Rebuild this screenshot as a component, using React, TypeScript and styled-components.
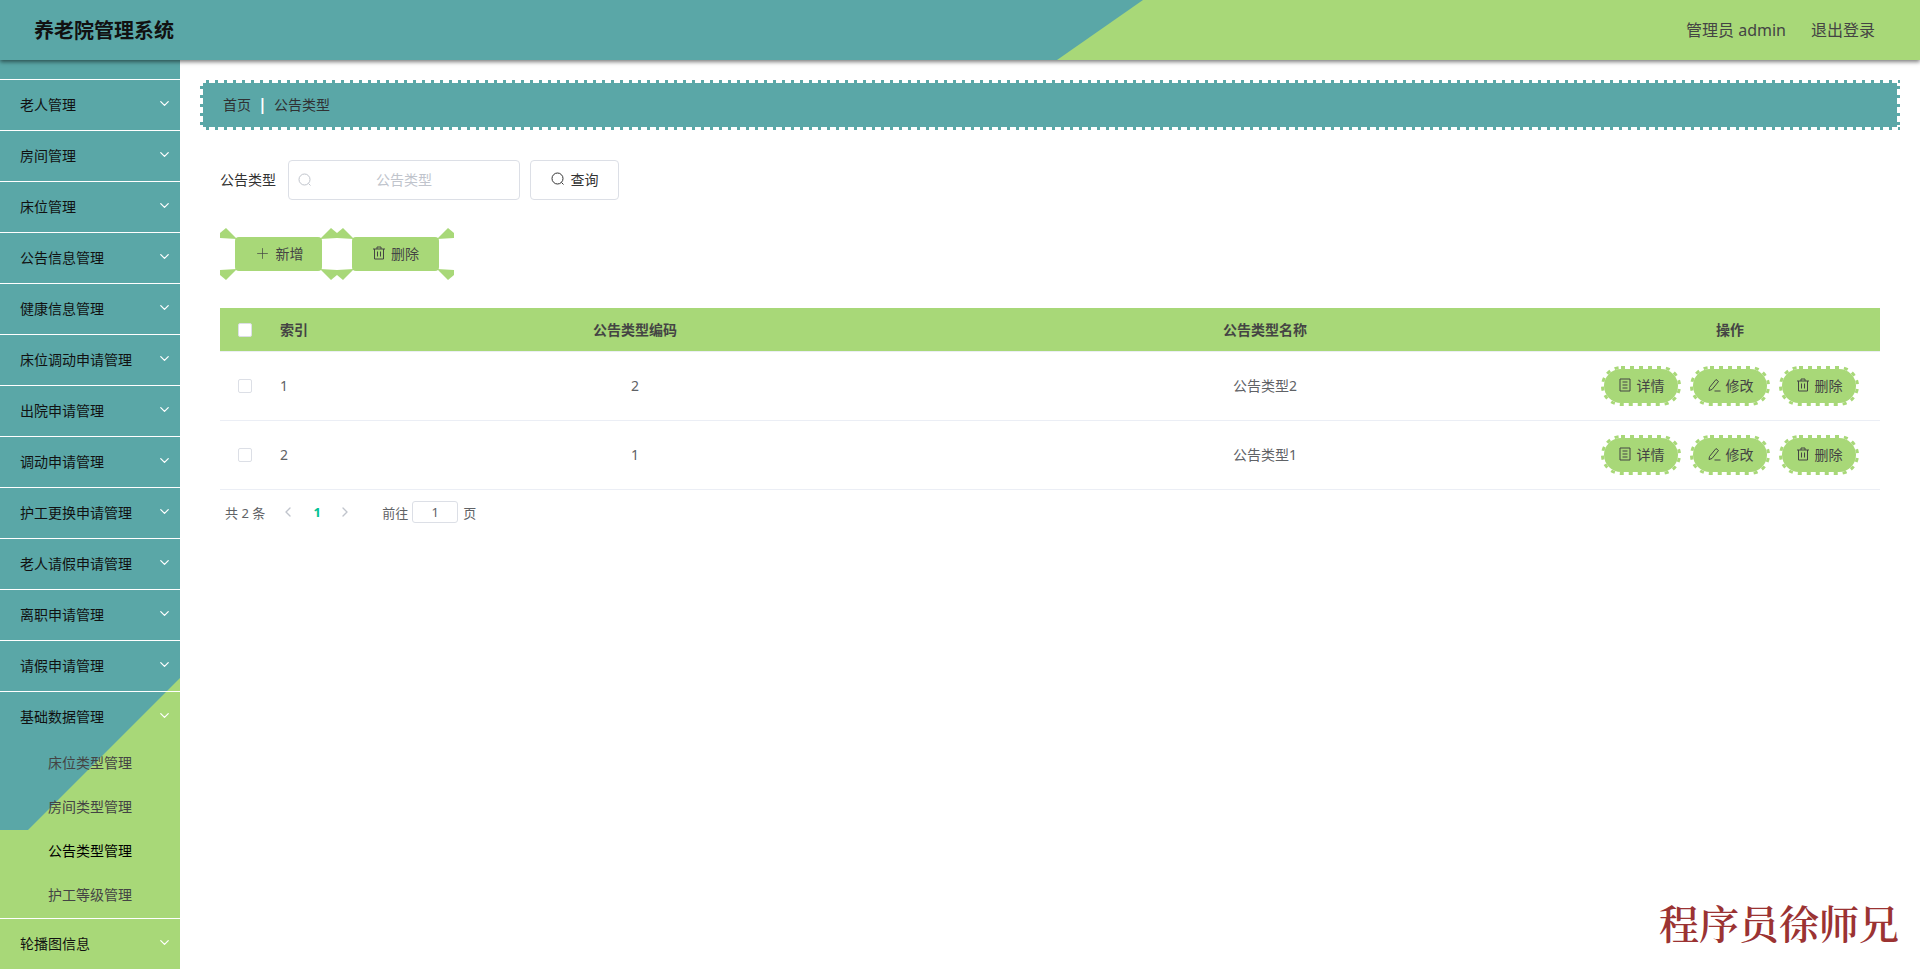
import styled, { createGlobalStyle } from "styled-components";
import { ChevronDown, ChevronLeft, ChevronRight, Plus } from "lucide-react";

const TEAL = "#5aa7a7";
const GREEN = "#a8d878";

const GlobalStyle = createGlobalStyle`
  html, body {
    margin: 0;
    height: 100%;
    overflow: hidden;
    background: #fff;
    font-family: "Noto Sans", "Noto Sans CJK SC", "Liberation Sans", sans-serif;
  }
  * {
    box-sizing: border-box;
  }
`;

const Page = styled.div`
  height: 969px;
  display: flex;
  flex-direction: column;
  overflow: hidden;
  position: relative;
`;

const Header = styled.header`
  position: relative;
  z-index: 5;
  flex: none;
  height: 60px;
  background: ${GREEN};
  box-shadow: 0 2px 4px rgba(0, 0, 0, 0.5);
  display: flex;
  align-items: center;
  justify-content: space-between;
  padding: 0 45px 2px 34px;
  &::before {
    content: "";
    position: absolute;
    inset: 0;
    background: ${TEAL};
    clip-path: polygon(0 0, 1143px 0, 1057px 60px, 0 60px);
  }
`;

const Title = styled.div`
  position: relative;
  font-size: 20px;
  font-weight: 700;
  color: #111;
`;

const UserBox = styled.div`
  position: relative;
  display: flex;
  gap: 25px;
  font-size: 16px;
  color: #444;
`;

const Body = styled.div`
  flex: 1;
  display: flex;
  min-height: 0;
`;

const Sidebar = styled.nav`
  position: relative;
  flex: none;
  width: 180px;
  padding-top: 19px;
  background: ${GREEN};
  overflow: hidden;
  &::before {
    content: "";
    position: absolute;
    inset: 0;
    background: ${TEAL};
    clip-path: polygon(0 0, 100% 0, 100% 618px, 28px 770px, 0 770px);
  }
`;

const MenuItem = styled.div`
  position: relative;
  height: 51px;
  border-top: 1px solid #fff;
  padding: 0 8px 3px 20px;
  display: flex;
  align-items: center;
  justify-content: space-between;
  font-size: 14px;
  color: #111;
  svg {
    color: #fff;
  }
`;

const SubItem = styled.div<{ $active?: boolean }>`
  position: relative;
  height: 44px;
  padding: 0 0 4px 48px;
  display: flex;
  align-items: center;
  font-size: 14px;
  color: ${(props) => (props.$active ? "#000" : "#444")};
`;

const Main = styled.main`
  flex: 1;
  min-width: 0;
  padding: 20px 20px 0;
`;

const Breadcrumb = styled.div`
  height: 50px;
  padding: 0 0 2px 23px;
  display: flex;
  align-items: center;
  font-size: 14px;
  color: #303133;
  background:
    linear-gradient(${TEAL}, ${TEAL}) center / calc(100% - 6px) calc(100% - 6px) no-repeat,
    repeating-linear-gradient(90deg, transparent 0 6px, ${TEAL} 6px 9px) top / 100% 3px no-repeat,
    repeating-linear-gradient(90deg, transparent 0 6px, ${TEAL} 6px 9px) bottom / 100% 3px no-repeat,
    repeating-linear-gradient(180deg, transparent 0 6px, ${TEAL} 6px 9px) left / 3px 100% no-repeat,
    repeating-linear-gradient(180deg, transparent 0 6px, ${TEAL} 6px 9px) right / 3px 100% no-repeat;
`;

const CrumbSep = styled.span`
  width: 3px;
  margin: 0 10px;
  display: flex;
  justify-content: center;
  font-size: 16px;
  font-weight: 700;
  color: #fff;
`;

const SearchRow = styled.div`
  margin-top: 30px;
  padding-left: 20px;
  display: flex;
  align-items: center;
  font-size: 14px;
  color: #333;
`;

const SearchLabel = styled.label`
  width: 68px;
  margin-top: -2px;
`;

const InputWrap = styled.div`
  position: relative;
  width: 232px;
  height: 40px;
  svg {
    position: absolute;
    left: 10px;
    top: 13px;
    color: #c0c4cc;
  }
`;

const SearchInput = styled.input`
  width: 100%;
  height: 100%;
  border: 1px solid #dcdfe6;
  border-radius: 4px;
  padding: 0 30px 2px;
  text-align: center;
  font: inherit;
  color: #606266;
  outline: none;
  &::placeholder {
    color: #c0c4cc;
  }
`;

const QueryButton = styled.button`
  margin-left: 10px;
  width: 89px;
  height: 40px;
  padding: 0 0 2px;
  background: #fff;
  border: 1px solid #dcdfe6;
  border-radius: 4px;
  display: flex;
  align-items: center;
  justify-content: center;
  gap: 6px;
  font: inherit;
  color: #333;
`;

const ActionRow = styled.div`
  margin-top: 37px;
  padding-left: 35px;
  display: flex;
  gap: 30px;
`;

const ActionButton = styled.button`
  position: relative;
  width: 87px;
  height: 34px;
  padding: 0 0 2px;
  background: ${GREEN};
  border: none;
  border-radius: 4px;
  display: flex;
  align-items: center;
  justify-content: center;
  gap: 5px;
  font: inherit;
  font-size: 14px;
  color: #444;
`;

const Wedge = styled.i<{ $right?: boolean; $bottom?: boolean }>`
  position: absolute;
  width: 17px;
  height: 12px;
  background: ${GREEN};
  clip-path: polygon(0 10px, 0 5px, 6px 0, 17px 11px);
  ${(props) => (props.$right ? "right: -15px;" : "left: -15px;")}
  ${(props) => (props.$bottom ? "bottom: -9px;" : "top: -9px;")}
  transform: scale(${(props) => (props.$right ? -1 : 1)}, ${(props) =>
    props.$bottom ? -1 : 1});
`;

const Table = styled.div`
  margin: 37px 20px 0;
  font-size: 14px;
  color: #606266;
`;

const Row = styled.div<{ $head?: boolean }>`
  display: grid;
  grid-template-columns: 50px 50px 630px 630px 300px;
  align-items: center;
  height: ${(props) => (props.$head ? "44px" : "69px")};
  background: ${(props) => (props.$head ? GREEN : "#fff")};
  background-clip: padding-box;
  border-bottom: 1px solid #ebeef5;
  font-weight: ${(props) => (props.$head ? 700 : 400)};
  color: ${(props) => (props.$head ? "#444" : "#606266")};
`;

const Cell = styled.div<{ $left?: boolean }>`
  padding: 0 10px 2px;
  text-align: ${(props) => (props.$left ? "left" : "center")};
`;

const CheckCell = styled.div`
  display: flex;
  padding-left: 18px;
`;

const CheckBox = styled.span`
  width: 14px;
  height: 14px;
  background: #fff;
  border: 1px solid #dcdfe6;
  border-radius: 2px;
`;

const OpsCell = styled.div`
  display: flex;
  justify-content: center;
  gap: 9px;
`;

const OpButton = styled.button`
  position: relative;
  width: 80px;
  height: 40px;
  background: ${GREEN};
  background-clip: padding-box;
  border: 3px solid transparent;
  border-radius: 20px;
  padding: 0 0 2px;
  display: flex;
  align-items: center;
  justify-content: center;
  gap: 5px;
  font: inherit;
  font-size: 14px;
  color: #444;
`;

const DotRing = styled.svg`
  position: absolute;
  left: -3px;
  top: -3px;
  width: 80px;
  height: 40px;
  fill: none;
  stroke: ${GREEN};
  stroke-width: 3;
  stroke-dasharray: 4 5;
`;

const Pager = styled.div`
  margin: 11px 20px 0;
  height: 22px;
  padding-left: 5px;
  display: flex;
  align-items: center;
  font-size: 13px;
  color: #606266;
  svg {
    color: #c0c4cc;
  }
`;

const PageNum = styled.span`
  width: 30px;
  margin: 0 5px 0 6px;
  text-align: center;
  font-weight: 700;
  color: #00c292;
`;

const Total = styled.span`
  margin-right: 15px;
`;

const Jump = styled.span`
  margin-left: 29px;
`;

const JumpInput = styled.input`
  width: 46px;
  height: 22px;
  margin: 0 5px 0 4px;
  border: 1px solid #dcdfe6;
  border-radius: 3px;
  text-align: center;
  font: inherit;
  color: #606266;
  outline: none;
`;

const Watermark = styled.div`
  position: absolute;
  right: 21px;
  bottom: 23px;
  font-family: "Noto Serif CJK SC", "Liberation Serif", serif;
  font-size: 40px;
  font-weight: 600;
  line-height: 48px;
  color: #9b3333;
`;

const SearchIcon = ({ size = 14 }: { size?: number }) => (
  <svg width={size} height={size} viewBox="0 0 14 14" fill="none" stroke="currentColor" strokeWidth="1">
    <circle cx="6.5" cy="6.5" r="5.5" />
    <path d="M10.5 10.5l2 2" />
  </svg>
);

const TrashIcon = () => (
  <svg width="14" height="14" viewBox="0 0 14 14" fill="none" stroke="currentColor" strokeWidth="1">
    <path d="M1 3h12M2.5 3v10h9V3M5 3V1h4v2M5.5 5.5v5M8.5 5.5v5" />
  </svg>
);

const DocIcon = () => (
  <svg width="14" height="14" viewBox="0 0 14 14" fill="none" stroke="currentColor" strokeWidth="1">
    <path d="M2 1h10v12H2zM4.5 4h5M4.5 7h5M4.5 10h5" />
  </svg>
);

const EditIcon = () => (
  <svg width="14" height="14" viewBox="0 0 14 14" fill="none" stroke="currentColor" strokeWidth="1">
    <path d="M9 1.5l2.5 2L5 11.5l-3 1 .5-3zM7.5 13h6" />
  </svg>
);

const menus = [
  "老人管理",
  "房间管理",
  "床位管理",
  "公告信息管理",
  "健康信息管理",
  "床位调动申请管理",
  "出院申请管理",
  "调动申请管理",
  "护工更换申请管理",
  "老人请假申请管理",
  "离职申请管理",
  "请假申请管理",
];

const subMenus = ["床位类型管理", "房间类型管理", "公告类型管理", "护工等级管理"];

const rows = [
  { id: 1, code: 2, name: "公告类型2" },
  { id: 2, code: 1, name: "公告类型1" },
];

const Wedges = () => (
  <>
    <Wedge />
    <Wedge $right />
    <Wedge $bottom />
    <Wedge $right $bottom />
  </>
);

const Ring = () => (
  <DotRing viewBox="0 0 80 40">
    <rect x="1.5" y="1.5" width="77" height="37" rx="18.5" />
  </DotRing>
);

const App = () => {
  return (
    <Page>
      <GlobalStyle />
      <Header>
        <Title>养老院管理系统</Title>
        <UserBox>
          <span>管理员 admin</span>
          <span>退出登录</span>
        </UserBox>
      </Header>
      <Body>
        <Sidebar>
          {menus.map((name) => (
            <MenuItem key={name}>
              {name}
              <ChevronDown size={15} strokeWidth={2} />
            </MenuItem>
          ))}
          <MenuItem>
            基础数据管理
            <ChevronDown size={15} strokeWidth={2} />
          </MenuItem>
          {subMenus.map((name) => (
            <SubItem key={name} $active={name === "公告类型管理"}>
              {name}
            </SubItem>
          ))}
          <MenuItem>
            轮播图信息
            <ChevronDown size={15} strokeWidth={2} />
          </MenuItem>
        </Sidebar>
        <Main>
          <Breadcrumb>
            首页
            <CrumbSep>|</CrumbSep>
            公告类型
          </Breadcrumb>
          <SearchRow>
            <SearchLabel>公告类型</SearchLabel>
            <InputWrap>
              <SearchIcon />
              <SearchInput placeholder="公告类型" />
            </InputWrap>
            <QueryButton>
              <SearchIcon />
              查询
            </QueryButton>
          </SearchRow>
          <ActionRow>
            <ActionButton>
              <Wedges />
              <Plus size={17} strokeWidth={1} />
              新增
            </ActionButton>
            <ActionButton>
              <Wedges />
              <TrashIcon />
              删除
            </ActionButton>
          </ActionRow>
          <Table>
            <Row $head>
              <CheckCell>
                <CheckBox />
              </CheckCell>
              <Cell $left>索引</Cell>
              <Cell>公告类型编码</Cell>
              <Cell>公告类型名称</Cell>
              <Cell>操作</Cell>
            </Row>
            {rows.map((row) => (
              <Row key={row.id}>
                <CheckCell>
                  <CheckBox />
                </CheckCell>
                <Cell $left>{row.id}</Cell>
                <Cell>{row.code}</Cell>
                <Cell>{row.name}</Cell>
                <OpsCell>
                  <OpButton>
                    <Ring />
                    <DocIcon />
                    详情
                  </OpButton>
                  <OpButton>
                    <Ring />
                    <EditIcon />
                    修改
                  </OpButton>
                  <OpButton>
                    <Ring />
                    <TrashIcon />
                    删除
                  </OpButton>
                </OpsCell>
              </Row>
            ))}
          </Table>
          <Pager>
            <Total>共 2 条</Total>
            <ChevronLeft size={16} strokeWidth={2} />
            <PageNum>1</PageNum>
            <ChevronRight size={16} strokeWidth={2} />
            <Jump>前往</Jump>
            <JumpInput defaultValue="1" />
            页
          </Pager>
        </Main>
      </Body>
      <Watermark>程序员徐师兄</Watermark>
    </Page>
  );
};

export default App;
